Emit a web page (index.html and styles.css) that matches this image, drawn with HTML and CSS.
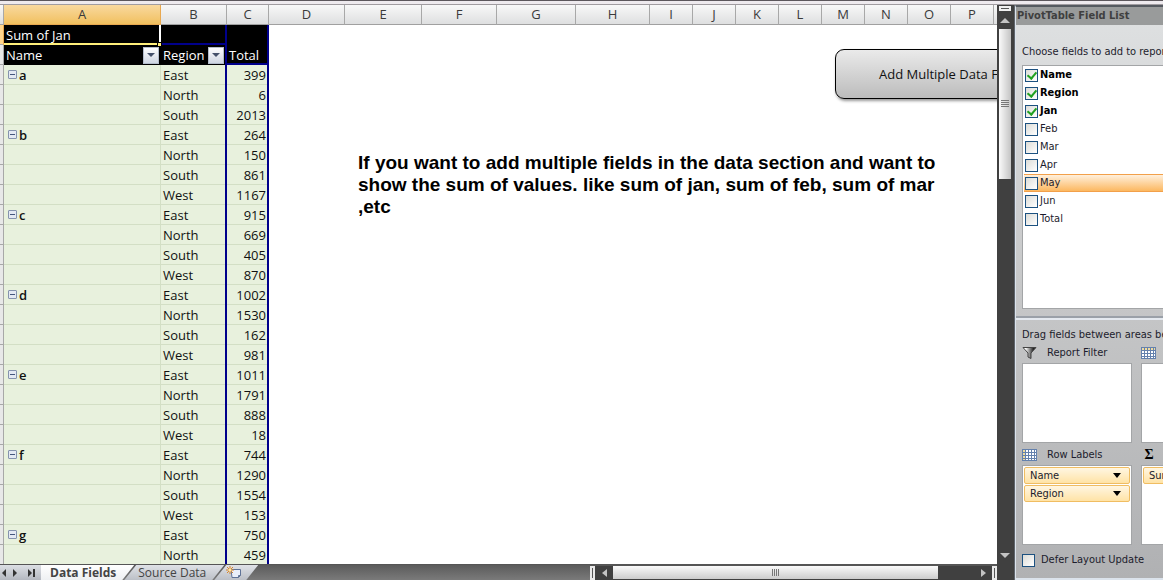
FILE: index.html
```
<!doctype html>
<html lang="en">
<head>
    <meta charset="utf-8">
    <title>Data Fields</title>
    <link rel="stylesheet" href="styles.css">
</head>

<body>
    <div class="ribbon-edge"></div>
    <div class="window">
        <main class="workbook">
            <div class="sheet">
                <table class="grid">
                    <colgroup>
                        <col class="w-gutter"><col class="w-a"><col class="w-b"><col class="w-c">
                        <col class="w-d"><col class="w-e"><col class="w-f"><col class="w-g"><col class="w-h">
                        <col class="w-small"><col class="w-small"><col class="w-small"><col class="w-small"><col class="w-small"><col class="w-small"><col class="w-small"><col class="w-small"><col class="w-small">
                    </colgroup>
                    <thead>
                        <tr>
                            <th></th><th class="selected">A</th><th>B</th><th>C</th><th>D</th><th>E</th><th>F</th><th>G</th><th>H</th>
                            <th>I</th><th>J</th><th>K</th><th>L</th><th>M</th><th>N</th><th>O</th><th>P</th><th></th>
                        </tr>
                    </thead>
                    <tbody>
                        <tr class="dark">
                            <td class="row-head selected"></td>
                            <td class="active-cell">Sum of Jan<span class="fill-handle"></span></td>
                            <td class="under"></td>
                            <td class="total"></td>
                        </tr>
                        <tr class="dark last">
                            <td class="row-head"></td>
                            <td><div class="field">Name<button class="filter" aria-label="Filter Name"><svg width="8" height="4"><path d="M0 0h8L4 4z"/></svg></button></div></td>
                            <td><div class="field">Region<button class="filter" aria-label="Filter Region"><svg width="8" height="4"><path d="M0 0h8L4 4z"/></svg></button></div></td>
                            <td class="total">Total</td>
                        </tr>
                        <tr><td class="row-head"></td><td class="name"><button class="collapse" aria-label="Collapse a"></button>a</td><td>East</td><td class="num">399</td></tr>
                        <tr><td class="row-head"></td><td></td><td>North</td><td class="num">6</td></tr>
                        <tr><td class="row-head"></td><td></td><td>South</td><td class="num">2013</td></tr>
                        <tr><td class="row-head"></td><td class="name"><button class="collapse" aria-label="Collapse b"></button>b</td><td>East</td><td class="num">264</td></tr>
                        <tr><td class="row-head"></td><td></td><td>North</td><td class="num">150</td></tr>
                        <tr><td class="row-head"></td><td></td><td>South</td><td class="num">861</td></tr>
                        <tr><td class="row-head"></td><td></td><td>West</td><td class="num">1167</td></tr>
                        <tr><td class="row-head"></td><td class="name"><button class="collapse" aria-label="Collapse c"></button>c</td><td>East</td><td class="num">915</td></tr>
                        <tr><td class="row-head"></td><td></td><td>North</td><td class="num">669</td></tr>
                        <tr><td class="row-head"></td><td></td><td>South</td><td class="num">405</td></tr>
                        <tr><td class="row-head"></td><td></td><td>West</td><td class="num">870</td></tr>
                        <tr><td class="row-head"></td><td class="name"><button class="collapse" aria-label="Collapse d"></button>d</td><td>East</td><td class="num">1002</td></tr>
                        <tr><td class="row-head"></td><td></td><td>North</td><td class="num">1530</td></tr>
                        <tr><td class="row-head"></td><td></td><td>South</td><td class="num">162</td></tr>
                        <tr><td class="row-head"></td><td></td><td>West</td><td class="num">981</td></tr>
                        <tr><td class="row-head"></td><td class="name"><button class="collapse" aria-label="Collapse e"></button>e</td><td>East</td><td class="num">1011</td></tr>
                        <tr><td class="row-head"></td><td></td><td>North</td><td class="num">1791</td></tr>
                        <tr><td class="row-head"></td><td></td><td>South</td><td class="num">888</td></tr>
                        <tr><td class="row-head"></td><td></td><td>West</td><td class="num">18</td></tr>
                        <tr><td class="row-head"></td><td class="name"><button class="collapse" aria-label="Collapse f"></button>f</td><td>East</td><td class="num">744</td></tr>
                        <tr><td class="row-head"></td><td></td><td>North</td><td class="num">1290</td></tr>
                        <tr><td class="row-head"></td><td></td><td>South</td><td class="num">1554</td></tr>
                        <tr><td class="row-head"></td><td></td><td>West</td><td class="num">153</td></tr>
                        <tr><td class="row-head"></td><td class="name"><button class="collapse" aria-label="Collapse g"></button>g</td><td>East</td><td class="num">750</td></tr>
                        <tr><td class="row-head"></td><td></td><td>North</td><td class="num">459</td></tr>
                    </tbody>
                </table>
                <p class="note">If you want to add multiple fields in the data section and want to show the sum of values. like sum of jan, sum of feb, sum of mar ,etc</p>
                <button class="macro">Add Multiple Data Fields</button>
            </div>
            <footer class="bottom">
                <nav class="tabs">
                    <button class="nav" aria-label="Previous sheet"><svg width="5" height="8"><path d="M4 0v8L0 4z"/></svg></button>
                    <button class="nav" aria-label="Next sheet"><svg width="5" height="8"><path d="M0 0v8l4-4z"/></svg></button>
                    <button class="nav" aria-label="Last sheet"><svg width="8" height="8"><path d="M0 0v8l4-4zM5 0h2v8H5z"/></svg></button>
                    <button class="tab current">Data Fields</button>
                    <button class="tab">Source Data</button>
                    <button class="tab new" aria-label="Insert worksheet">
                        <svg width="16" height="13" viewBox="0 0 16 13">
                            <path d="M5 3.500h9.500v6l-2 2H6z" fill="#e9effa" stroke="#5f7397"/>
                            <path d="M14.500 9.500h-2v2" fill="none" stroke="#5f7397"/>
                            <path d="M4 0v8M0 4h8M1 1l6 6M7 1L1 7" stroke="#d9842b"/>
                            <circle cx="4" cy="4" r="1.500" fill="#ffe9a0"/>
                        </svg>
                    </button>
                </nav>
                <div class="hscroll">
                    <span class="split"></span>
                    <button class="arrow" aria-label="Scroll left"><svg width="5" height="8"><path d="M5 0v8L0 4z"/></svg></button>
                    <div class="htrack"><div class="hthumb"><i></i></div></div>
                    <button class="arrow" aria-label="Scroll right"><svg width="5" height="8"><path d="M0 0v8l5-4z"/></svg></button>
                    <span class="split"></span>
                </div>
            </footer>
        </main>

        <div class="vscroll">
            <span class="vsplit"></span>
            <button class="arrow" aria-label="Scroll up"><svg width="10" height="5"><path d="M0 5h10L5 0z"/></svg></button>
            <div class="vtrack"><div class="vthumb"><i></i></div></div>
            <button class="arrow" aria-label="Scroll down"><svg width="10" height="5"><path d="M0 0h10L5 5z"/></svg></button>
        </div>

        <aside class="pane">
            <h2>PivotTable Field List</h2>
            <section class="choose">
                <p>Choose fields to add to report:</p>
                <div class="fields">
                    <label class="on"><input type="checkbox" checked>Name</label>
                    <label class="on"><input type="checkbox" checked>Region</label>
                    <label class="on"><input type="checkbox" checked>Jan</label>
                    <label><input type="checkbox">Feb</label>
                    <label><input type="checkbox">Mar</label>
                    <label><input type="checkbox">Apr</label>
                    <label class="hover"><input type="checkbox">May</label>
                    <label><input type="checkbox">Jun</label>
                    <label><input type="checkbox">Total</label>
                </div>
            </section>
            <section class="areas">
                <p>Drag fields between areas below:</p>
                <div class="area-grid">
                    <div class="area">
                        <h3>
                            <svg width="16" height="14" viewBox="0 0 16 14">
                                <defs><linearGradient id="funnel"><stop offset="0.200" stop-color="#fff"/><stop offset="0.800" stop-color="#222"/></linearGradient></defs>
                                <path d="M1 1.500h13L9 7v5.500l-3-1.500V7z" fill="url(#funnel)" stroke="#444"/>
                            </svg>
                            Report Filter
                        </h3>
                        <div class="drop"></div>
                    </div>
                    <div class="area">
                        <h3>
                            <svg width="16" height="14" viewBox="0 0 16 14">
                                <path d="M0 1h15v12H0z" fill="#fff"/>
                                <path d="M0 1h15v3H0z" fill="#efdca0"/>
                                <path d="M0 1.500h15M0 4.500h15M0 7.500h15M0 10.500h15M0 12.500h15M.5 1v12M3.500 1v12M6.500 1v12M9.500 1v12M12.500 1v12M14.500 1v12" stroke="#6481ad"/>
                            </svg>
                            Column Labels
                        </h3>
                        <div class="drop"></div>
                    </div>
                    <div class="area">
                        <h3>
                            <svg width="16" height="14" viewBox="0 0 16 14">
                                <path d="M0 1h15v12H0z" fill="#fff"/>
                                <path d="M0 1h4v12H0z" fill="#efdca0"/>
                                <path d="M0 1.500h15M0 4.500h15M0 7.500h15M0 10.500h15M0 12.500h15M.5 1v12M3.500 1v12M6.500 1v12M9.500 1v12M12.500 1v12M14.500 1v12" stroke="#6481ad"/>
                            </svg>
                            Row Labels
                        </h3>
                        <div class="drop">
                            <button class="chip">Name<svg width="8" height="5"><path d="M0 0h8L4 5z"/></svg></button>
                            <button class="chip">Region<svg width="8" height="5"><path d="M0 0h8L4 5z"/></svg></button>
                        </div>
                    </div>
                    <div class="area">
                        <h3><span class="sigma">Σ</span>Values</h3>
                        <div class="drop">
                            <button class="chip">Sum of Jan<svg width="8" height="5"><path d="M0 0h8L4 5z"/></svg></button>
                        </div>
                    </div>
                </div>
                <label class="defer"><input type="checkbox">Defer Layout Update</label>
            </section>
        </aside>
    </div>
</body>
</html>
```
FILE: styles.css
```
* {
    box-sizing: border-box;
}
body {
    margin: 0;
    height: 100vh;
    display: flex;
    flex-direction: column;
    overflow: hidden;
    background-color: #404040;
    font-family: "Open Sans", "Noto Sans", sans-serif;
    font-size: 13px;
    color: #111;
}
button {
    margin: 0;
    padding: 0;
    border: 0;
    background: none;
    font: inherit;
    color: inherit;
}
p, h2, h3 {
    margin: 0;
}
.ribbon-edge {
    flex: none;
    height: 5px;
    border-top: 1px solid #5c575c;
    border-bottom: 1px solid #a09ca0;
    background-color: #eeeaee;
}
.window {
    flex: 1;
    display: flex;
    min-height: 0;
}
.workbook {
    flex: 1;
    min-width: 0;
    display: flex;
    flex-direction: column;
}

/* sheet */
.sheet {
    position: relative;
    flex: 1;
    min-height: 0;
    overflow: hidden;
    background-color: white;
}
.grid {
    width: 1037px;
    table-layout: fixed;
    border-collapse: separate;
    border-spacing: 0;
}
.w-gutter {
    width: 4px;
}
.w-a {
    width: 157px;
}
.w-b {
    width: 66px;
}
.w-c {
    width: 42px;
}
.w-d {
    width: 76px;
}
.w-e {
    width: 77px;
}
.w-f {
    width: 75px;
}
.w-g {
    width: 79px;
}
.w-h {
    width: 74px;
}
.w-small {
    width: 43px;
}
.grid th, .grid td {
    height: 20px;
    padding: 0 2px;
    line-height: 19px;
    white-space: nowrap;
}
.grid th {
    font-weight: normal;
    color: #3a3a3a;
    background: linear-gradient(#f8f8f8, #dedfe0);
    border-right: 1px solid #a8a8a8;
    border-bottom: 1px solid #a0a0a0;
}
.grid th.selected {
    background: linear-gradient(#f9d99f, #f1c05f);
    border-color: #e8a850;
}
.grid td {
    background-color: #e8f1dd;
    border-right: 1px solid #d3dfc5;
    box-shadow: inset 0 -1px #d3dfc5;
}
.grid td.row-head {
    padding: 0;
    background-color: #e8e8e8;
    border-color: #a8a8a8;
    box-shadow: inset 0 -1px #a8a8a8;
}
.grid td.row-head.selected {
    background-color: #ffd58d;
    border-color: #e8a850;
}
.grid .dark td:not(.row-head) {
    color: white;
    background-color: black;
    border-color: black;
    box-shadow: none;
}
.grid td:nth-child(n+3), .grid .dark td:nth-child(n+3) {
    border-right: 2px solid #00008b;
}
.grid .dark td.active-cell {
    position: relative;
    border-right: 2px solid white;
    box-shadow: inset 0 -2px #ffef7a;
}
.fill-handle {
    position: absolute;
    right: -3px;
    bottom: -2px;
    width: 5px;
    height: 5px;
    background-color: #ffef7a;
    border: 1px solid black;
}
.grid .dark td.under, .grid .last td.total {
    box-shadow: inset 0 -2px #00008b;
}
.grid .dark td:nth-child(n+3) {
    border-right-color: #00008b;
}
.grid .num {
    text-align: right;
    padding-right: 1px;
}
.grid .name {
    font-weight: 600;
}
.field {
    display: flex;
    justify-content: space-between;
    align-items: center;
    height: 19px;
}
.filter {
    display: flex;
    align-items: center;
    justify-content: center;
    width: 16px;
    height: 17px;
    margin-right: -1px;
    border: 1px solid #b3bccb;
    background: linear-gradient(#fdfdfe, #cfd6e2);
    fill: #44506a;
}
.collapse {
    width: 9px;
    height: 9px;
    margin: 0 2px;
    border: 1px solid #8593ae;
    border-radius: 1px;
    vertical-align: 2px;
    background: linear-gradient(#44567c, #44567c) center / 5px 1px no-repeat #e3e9f3;
}
.note {
    position: absolute;
    left: 358px;
    top: 147px;
    width: 600px;
    font: bold 19px/22px "Liberation Sans", Arial, sans-serif;
    color: black;
}
.macro {
    position: absolute;
    left: 835px;
    top: 44px;
    height: 50px;
    padding: 0 43px;
    white-space: nowrap;
    border: 1px solid black;
    border-radius: 9px;
    background: linear-gradient(#eaeaea, #bcbcbc);
    box-shadow: 1px 2px 3px #999;
}

/* bottom bar */
.bottom {
    flex: none;
    display: flex;
    height: 16px;
    background: linear-gradient(#595959, #7a7a7a);
}
.tabs {
    flex: 1;
    display: flex;
    border-top: 1px solid #555;
}
.nav {
    display: flex;
    align-items: center;
    justify-content: center;
    width: 14px;
    background: linear-gradient(#dcdfe4, #b4b8c0);
    fill: #333;
}
.nav:first-child {
    width: 8px;
}
.nav:nth-child(3) {
    width: 19px;
}
.tab {
    position: relative;
    height: 15px;
    padding: 0 18px 0 14px;
    line-height: 15px;
    font-size: 12px;
    color: #444;
    white-space: nowrap;
    clip-path: polygon(12px 0, 100% 0, calc(100% - 12px) 100%, 0 100%);
    background: linear-gradient(#dfe2e7, #bcc0c7);
    margin-left: -10px;
}
.tab.current {
    z-index: 1;
    margin-left: 0;
    padding-left: 9px;
    font-weight: bold;
    clip-path: polygon(0 0, 100% 0, calc(100% - 12px) 100%, 0 100%);
    background: linear-gradient(white, #eef0f2);
}
.tab.new {
    display: flex;
    align-items: center;
    padding: 0 16px 0 12px;
}
.hscroll {
    display: flex;
    width: 407px;
    border-top: 2px solid #555;
    background-color: #404040;
}
.split {
    width: 5px;
    border: 2px solid #e8e8e8;
    background-color: #555;
}
.arrow {
    display: flex;
    align-items: center;
    justify-content: center;
    width: 18px;
    fill: #c4c4c4;
}
.htrack {
    flex: 1;
}
.hthumb {
    display: flex;
    align-items: center;
    justify-content: center;
    width: 90%;
    height: 13px;
    background: linear-gradient(#fafafa, #cccccc);
}
.hthumb i {
    width: 7px;
    height: 7px;
    background: repeating-linear-gradient(90deg, #777 0 1px, transparent 1px 2px);
}
.vscroll {
    display: flex;
    flex-direction: column;
    width: 18px;
    padding: 1px 3px 16px 2px;
    background-color: #404040;
    border-right: 1px solid #60656c;
}
.vsplit {
    height: 5px;
    border: 2px solid #f0f0f0;
    background-color: #555;
}
.vscroll .arrow {
    width: 100%;
    height: 18px;
}
.vtrack {
    flex: 1;
}
.vthumb {
    display: flex;
    align-items: center;
    justify-content: center;
    height: 29%;
    background: linear-gradient(90deg, #fafafa, #c4c4c4);
}
.vthumb i {
    width: 8px;
    height: 7px;
    background: repeating-linear-gradient(#777 0 1px, transparent 1px 2px);
}

/* field list */
.pane {
    display: flex;
    flex-direction: column;
    width: 148px;
    overflow: hidden;
    border-top: 2px solid #555a60;
    border-left: 1px solid #dbe3ec;
    border-bottom: 2px solid #dbe3ec;
    background: linear-gradient(#dfe1e2, #c6c7c8 50%, #b0b1b3);
    font-family: "DejaVu Sans Condensed", "Noto Sans", sans-serif;
    font-size: 11px;
    line-height: 18px;
    color: #1c1c2c;
    white-space: nowrap;
}
.pane h2 {
    padding-left: 1px;
    font-size: 11px;
    line-height: 18px;
    color: #3f3f3f;
    background-color: #999b9b;
}
.choose {
    flex: 1;
    display: flex;
    flex-direction: column;
    width: 240px;
    padding: 18px 6px 7px;
    border-bottom: 2px solid #9aa0a8;
}
.fields {
    flex: 1;
    margin-top: 4px;
    padding: 0 1px;
    background-color: white;
    border: 1px solid #a3a5a7;
}
.fields label, .defer {
    display: flex;
    align-items: center;
    height: 18px;
}
.fields .on {
    font-weight: bold;
    color: black;
}
.fields .hover {
    background: linear-gradient(#fff0dc, #fcb860);
    border: 1px solid #f2a04a;
    border-width: 1px 0;
}
.pane input {
    appearance: none;
    width: 13px;
    height: 13px;
    margin: 0 2px 0 1px;
    border: 1px solid #1c5180;
    background: linear-gradient(135deg, #dcdcd7, white);
}
.pane input:checked {
    display: flex;
    align-items: center;
    justify-content: center;
}
.pane input:checked::before {
    content: "";
    width: 4px;
    height: 7px;
    margin-bottom: 2px;
    border: solid #21a121;
    border-width: 0 2px 2px 0;
    transform: rotate(40deg);
}
.areas {
    width: 240px;
    padding: 6px 6px 9px;
    border-top: 2px solid #e4e9ef;
}
.area-grid {
    display: grid;
    grid-template-columns: 110px 110px;
    column-gap: 9px;
    row-gap: 3px;
}
.area h3 {
    display: flex;
    align-items: center;
    gap: 9px;
    height: 19px;
    padding-bottom: 1px;
    font-size: 11px;
    font-weight: normal;
}
.sigma {
    width: 16px;
    font: bold 14px/18px "Liberation Serif", serif;
    text-align: center;
    color: black;
}
.drop {
    height: 80px;
    padding: 1px;
    background-color: white;
    border: 1px solid #a3a5a7;
}
.chip {
    display: flex;
    align-items: center;
    justify-content: space-between;
    width: 100%;
    height: 17px;
    margin-bottom: 1px;
    padding: 0 8px 0 5px;
    line-height: 15px;
    border: 1px solid #f0bd62;
    border-radius: 2px;
    background: linear-gradient(#fff6e2, #ffe3a6);
}
.defer {
    margin-top: 6px;
}
.defer input {
    margin: 0 6px 0 0;
}
```
